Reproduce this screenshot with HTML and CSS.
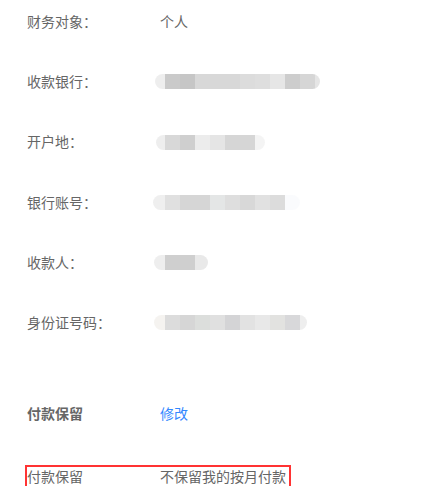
FILE: index.html
```html
<!DOCTYPE html>
<html lang="zh-CN">
<head>
<meta charset="utf-8">
<title>付款信息</title>
<link rel="stylesheet" href="styles.css">
</head>
<body>
<div class="page">
  <div class="info">
    <div class="row"><span class="label">财务对象：</span><span class="value">个人</span></div>
    <div class="row"><span class="label">收款银行：</span><span class="pill pill-bank"></span></div>
    <div class="row"><span class="label">开户地：</span><span class="pill pill-place"></span></div>
    <div class="row"><span class="label">银行账号：</span><span class="pill pill-account"></span></div>
    <div class="row"><span class="label">收款人：</span><span class="pill pill-payee"></span></div>
    <div class="row"><span class="label">身份证号码：</span><span class="pill pill-id"></span></div>
  </div>
  <div class="section-head">
    <span class="label strong">付款保留</span><a class="link" href="#">修改</a>
  </div>
  <div class="highlight-wrap">
    <div class="highlight"><span class="label">付款保留</span><span class="value">不保留我的按月付款</span></div>
  </div>
</div>
</body>
</html>
```
FILE: styles.css
```css
html, body {
  margin: 0;
  padding: 0;
  background: #fff;
}
.page {
  padding: 11px 0 0 27px;
  font-family: "Noto Sans CJK SC", "Noto Sans", sans-serif;
  font-size: 14px;
  color: #666;
}
.info {
  display: flex;
  flex-direction: column;
  gap: 40.2px;
}
.row {
  display: flex;
  align-items: center;
  height: 20px;
  line-height: 20px;
}
.label {
  width: 133px;
  flex: none;
  white-space: nowrap;
}
.value {
  white-space: nowrap;
}
.pill {
  display: block;
  height: 15px;
  border-radius: 8px;
  filter: blur(0.4px);
}
.pill-bank {
  width: 165px;
  margin-left: -5px;
  margin-top: 1px;
  background: linear-gradient(to right,
    #eee 0 10px, #cacaca 10px 25px, #c6c6c6 25px 40px, #d8d8d8 40px 85px,
    #dcdcdc 85px 100px, #dedede 100px 115px, #e6e6e6 115px 130px,
    #cdcdcd 130px 145px, #d6d6d6 145px 160px, #e5e5e5 160px);
}
.pill-place {
  width: 109px;
  margin-left: -4px;
  margin-top: 2px;
  background: linear-gradient(to right,
    #eee 0 9px, #d8d8d8 9px 24px, #cfcfcf 24px 39px, #ececec 39px 54px,
    #e5e5e5 54px 69px, #d6d6d6 69px 99px, #f4f4f4 99px);
}
.pill-account {
  width: 147px;
  margin-left: -7px;
  margin-top: 1px;
  background: linear-gradient(to right,
    #efefef 0 12px, #e0e0e0 12px 27px, #d6d6d6 27px 57px, #e4e6e6 57px 72px,
    #dedede 72px 87px, #d8d8d8 87px 102px, #e1e1e1 102px 117px,
    #dcdcdc 117px 132px, #fafbfd 132px);
}
.pill-payee {
  width: 54px;
  margin-left: -6px;
  margin-top: 1px;
  background: linear-gradient(to right,
    #eee 0 11px, #cfcfcf 11px 41px, #e9e9e9 41px);
}
.pill-id {
  width: 153px;
  margin-left: -6px;
  margin-top: 1px;
  background: linear-gradient(to right,
    #f5f3f0 0 11px, #dcdcdc 11px 26px, #d6d6d6 26px 41px, #dcdedc 41px 56px,
    #e0e0e0 56px 71px, #d4d4d6 71px 86px, #e2e2e2 86px 101px,
    #e8e8e8 101px 116px, #e2e2e0 116px 131px, #d8d8da 131px 146px, #eee 146px);
}
.section-head {
  display: flex;
  align-items: center;
  height: 20px;
  line-height: 20px;
  margin-top: 71px;
}
.strong {
  font-weight: bold;
}
.link {
  color: #3388ff;
  text-decoration: none;
  margin-top: 1px;
}
.highlight-wrap {
  margin-top: 43px;
}
.highlight {
  display: inline-flex;
  align-items: center;
  height: 19px;
  line-height: 19px;
  padding-right: 3px;
  outline: 2px solid #ff3333;
}
```
